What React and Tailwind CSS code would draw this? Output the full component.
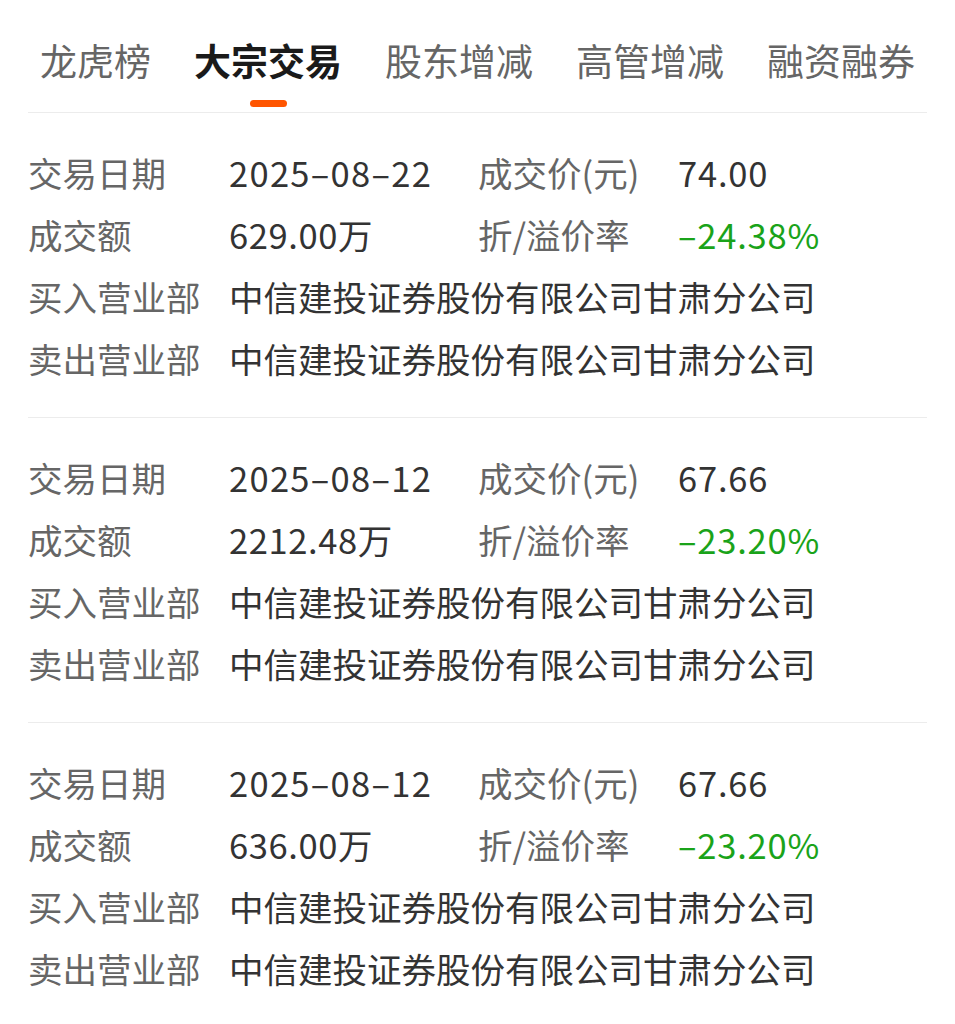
import { useState } from "react";

const tabs = ["龙虎榜", "大宗交易", "股东增减", "高管增减", "融资融券"];

const deals = [
  { date: "2025-08-22", price: "74.00", amount: "629.00万", rate: "-24.38%", buyer: "中信建投证券股份有限公司甘肃分公司", seller: "中信建投证券股份有限公司甘肃分公司" },
  { date: "2025-08-12", price: "67.66", amount: "2212.48万", rate: "-23.20%", buyer: "中信建投证券股份有限公司甘肃分公司", seller: "中信建投证券股份有限公司甘肃分公司" },
  { date: "2025-08-12", price: "67.66", amount: "636.00万", rate: "-23.20%", buyer: "中信建投证券股份有限公司甘肃分公司", seller: "中信建投证券股份有限公司甘肃分公司" },
];

function Row({ children }) {
  return <div className="grid h-[62px] grid-cols-[201px_249px_200px_1fr] items-center">{children}</div>;
}

export default function App() {
  const [active, setActive] = useState(1);

  return (
    <div className="min-h-screen bg-white px-[28px] font-['Noto_Sans_CJK_SC',sans-serif]">
      {/* Tabs */}
      <div className="flex gap-[43px] border-b border-[#ececec] pb-[5px] pl-[12px] pt-[40px]">
        {tabs.map((t, i) => (
          <button key={t} onClick={() => setActive(i)} className="flex flex-col items-center">
            <span className={`text-[37px] leading-[40px] ${active === i ? "font-bold text-[#1a1a1a]" : "text-[#666666]"}`}>{t}</span>
            <span className={`mt-[20px] h-[7px] w-[37px] rounded-full ${active === i ? "bg-[#ff5500]" : "bg-transparent"}`} />
          </button>
        ))}
      </div>

      {/* Block trades */}
      {deals.map((d, i) => (
        <div key={i} className={`pb-[27px] pt-[29px] text-[34.5px] ${i < deals.length - 1 ? "border-b border-[#ececec]" : ""}`}>
          <Row>
            <span className="text-[#666666]">交易日期</span>
            <span className="tracking-[1.3px] text-[#333333]">{d.date.replace(/-/g, "–")}</span>
            <span className="text-[#666666]">成交价(元)</span>
            <span className="tracking-[0.8px] text-[#333333]">{d.price}</span>
          </Row>
          <Row>
            <span className="text-[#666666]">成交额</span>
            <span className="tracking-[0.6px] text-[#333333]">{d.amount}</span>
            <span className="text-[#666666]">折/溢价率</span>
            <span className="tracking-[0.8px] text-[#1aa31a]">{d.rate.replace("-", "–")}</span>
          </Row>
          <Row>
            <span className="text-[#666666]">买入营业部</span>
            <span className="col-span-3 text-[#333333]">{d.buyer}</span>
          </Row>
          <Row>
            <span className="text-[#666666]">卖出营业部</span>
            <span className="col-span-3 text-[#333333]">{d.seller}</span>
          </Row>
        </div>
      ))}
    </div>
  );
}
